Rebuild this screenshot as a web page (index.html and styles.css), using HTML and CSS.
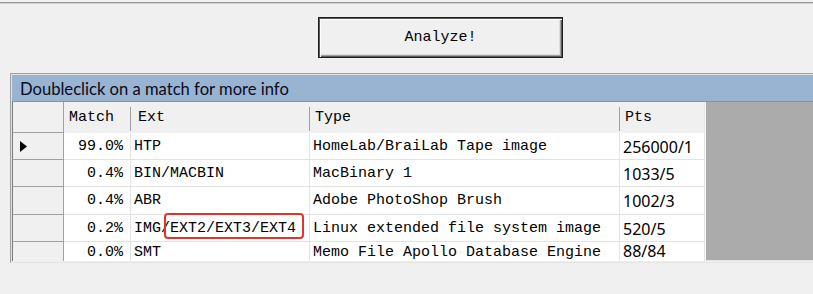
FILE: index.html
```html
<!DOCTYPE html>
<html>
<head>
<meta charset="utf-8">
<link rel="stylesheet" href="styles.css">
</head>
<body>
<div class="topline"></div>
<div class="toolbar"><button class="analyze">Analyze!</button></div>
<div class="grid">
  <div class="caption">Doubleclick on a match for more info</div>
  <div class="body">
    <div class="table">
      <div class="row head">
        <div class="rh"></div>
        <div class="c match">Match</div>
        <div class="c ext">Ext</div>
        <div class="c type">Type</div>
        <div class="c pts">Pts</div>
      </div>
      <div class="row">
        <div class="rh"><svg class="arrow" width="7" height="11" viewBox="0 0 7 11"><polygon points="0,0 7,5.5 0,11" fill="#000"/></svg></div>
        <div class="c match">99.0%</div>
        <div class="c ext">HTP</div>
        <div class="c type">HomeLab/BraiLab Tape image</div>
        <div class="c pts">256000/1</div>
      </div>
      <div class="row">
        <div class="rh"></div>
        <div class="c match">0.4%</div>
        <div class="c ext">BIN/MACBIN</div>
        <div class="c type">MacBinary 1</div>
        <div class="c pts">1033/5</div>
      </div>
      <div class="row">
        <div class="rh"></div>
        <div class="c match">0.4%</div>
        <div class="c ext">ABR</div>
        <div class="c type">Adobe PhotoShop Brush</div>
        <div class="c pts">1002/3</div>
      </div>
      <div class="row">
        <div class="rh"></div>
        <div class="c match">0.2%</div>
        <div class="c ext">IMG/EXT2/EXT3/EXT4<span class="mark"></span></div>
        <div class="c type">Linux extended file system image</div>
        <div class="c pts">520/5</div>
      </div>
      <div class="row last">
        <div class="rh"></div>
        <div class="c match">0.0%</div>
        <div class="c ext">SMT</div>
        <div class="c type">Memo File Apollo Database Engine</div>
        <div class="c pts">88/84</div>
      </div>
    </div>
    <div class="empty"></div>
  </div>
</div>
</body>
</html>
```
FILE: styles.css
```css
html, body {
  margin: 0;
  padding: 0;
  background: #f0f0f0;
  overflow: hidden;
}
body {
  width: 813px;
  height: 294px;
  font-family: "Liberation Mono", monospace;
}
.topline {
  margin-top: 2px;
  height: 0;
  border-top: 1px solid #9a9a9a;
  border-bottom: 1px solid #cfcfcf;
}
.toolbar {
  padding: 13px 0 15px 318px;
  display: flex;
}
.analyze {
  box-sizing: border-box;
  width: 245px;
  height: 41px;
  margin: 0;
  padding: 0;
  background: #f0f0f0;
  border: 1px solid #1e1e1e;
  box-shadow: inset 1px 1px 0 #5a5a5a, inset 2px 2px 0 #ffffff, inset -1px -1px 0 #5a5a5a, inset -2px -2px 0 #a0a0a0, inset -3px -3px 0 #dcdcdc;
  font-family: "Liberation Mono", monospace;
  font-size: 15px;
  color: #000;
}
.grid {
  box-sizing: border-box;
  margin-left: 10px;
  height: 190px;
  border-top: 1px solid #a0a0a0;
  border-left: 1px solid #a0a0a0;
  box-shadow: inset 1px 1px 0 #e3e3e3;
  padding: 1px 0 1px 1px;
  border-bottom: 1px solid #e3e3e3;
  overflow: hidden;
  display: flex;
  flex-direction: column;
}
.caption {
  box-sizing: border-box;
  height: 27px;
  background: #99b4d1;
  border-bottom: 1px solid #7f93aa;
  font-family: "Lato", sans-serif;
  font-size: 16.6px;
  color: #0a0a1e;
  padding-left: 8px;
  display: flex;
  align-items: center;
  padding-top: 1px;
}
.body {
  display: flex;
  flex: 1;
  overflow: hidden;
}
.table {
  display: flex;
  flex-direction: column;
  flex: none;
  background: #ffffff;
}
.row {
  display: flex;
  box-sizing: border-box;
  height: 27.2px;
  flex: none;
}
.row.head {
  height: 31px;
  background: #f0f0f0;
}
.row.last {
  height: 19px;
}
.row.last .c {
  align-items: flex-start;
  padding-top: 3px;
  border-bottom: none;
}
.row.last .rh {
  border-bottom: none;
}
.rh {
  box-sizing: border-box;
  width: 52px;
  background: #f0f0f0;
  border-left: 1px solid #7a7a7a;
  border-right: 1px solid #a0a0a0;
  border-bottom: 1px solid #a0a0a0;
  display: flex;
  align-items: center;
  padding-left: 7px;
  padding-top: 1px;
}
.c {
  box-sizing: border-box;
  border-right: 1px solid #e3e3e3;
  border-bottom: 1px solid #e3e3e3;
  font-size: 15px;
  line-height: 16px;
  color: #000;
  display: flex;
  align-items: center;
  padding-left: 3px;
  padding-top: 2px;
  white-space: nowrap;
  position: relative;
}
.head .c {
  border-right: none;
  border-bottom: 1px solid #f0f0f0;
  background: linear-gradient(#a0a0a0, #a0a0a0) no-repeat right 0 top 5px / 1px 24px;
  padding-left: 5px;
  padding-top: 1px;
}
.head .pts {
  background: none;
  border-right: 1px solid #e8e8e8;
}
.match { width: 67px; justify-content: flex-end; padding-right: 7px; }
.head .match { justify-content: flex-start; padding-right: 0; }
.ext { width: 179px; }
.head .ext { padding-left: 7px; }
.type { width: 310px; }
.pts {
  width: 85px;
  font-family: "Noto Sans", sans-serif;
  font-size: 16px;
  line-height: 16px;
}
.row.last .pts { padding-top: 1px; }
.head .pts { font-family: "Liberation Mono", monospace; font-size: 15px; }
.mark {
  position: absolute;
  left: 33px;
  top: -2px;
  width: 140px;
  height: 26px;
  box-sizing: border-box;
  border: 2px solid #e5322a;
  border-radius: 4px;
}
.empty {
  flex: 1;
  background: #ababab;
  border-left: 1px solid #f8f8f8;
  border-bottom: 1px solid #e3e3e3;
}
```
